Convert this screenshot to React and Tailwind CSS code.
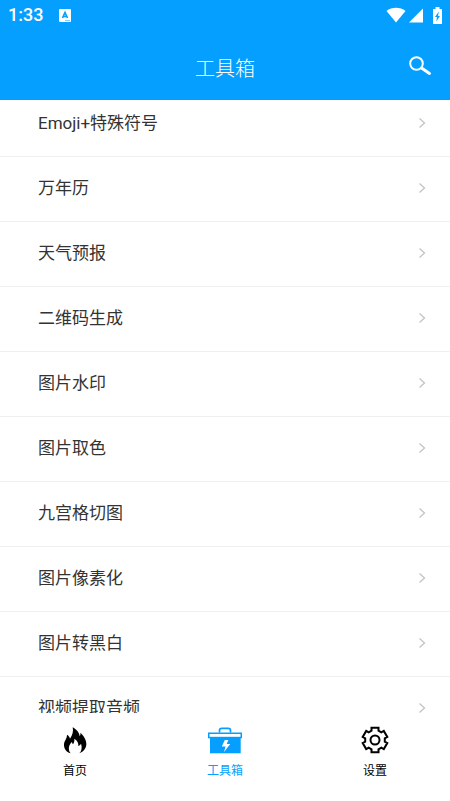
import React from "react";

const tools = [
  "Emoji+特殊符号",
  "万年历",
  "天气预报",
  "二维码生成",
  "图片水印",
  "图片取色",
  "九宫格切图",
  "图片像素化",
  "图片转黑白",
  "视频提取音频",
];

function StatusBar() {
  return (
    <div className="flex h-[30px] items-center justify-between px-2">
      <div className="flex items-center gap-4">
        <span className="font-['Roboto',sans-serif] text-[18px] leading-6 font-medium">1:33</span>
        <svg className="h-[13px] w-3" viewBox="0 0 12 13" aria-hidden="true">
          <rect width="12" height="13" rx="1" fill="#fff" />
          <path d="M3.500 9 6 3.500 8.500 9M4.300 7.500h3.400" fill="none" stroke="#049fff" strokeWidth="1.700" />
          <path d="M6 11.500h5" stroke="#049fff" strokeWidth="0.500" />
        </svg>
      </div>
      <div className="flex items-center" aria-hidden="true">
        <svg className="h-4 w-5" viewBox="0 0 20 16">
          <path d="M0.500 4C6 -0.300 14 -0.300 19.500 4L10 15.500Z" fill="#fff" />
        </svg>
        <svg className="ml-[3px] h-4 w-[14px]" viewBox="0 0 14 16">
          <path d="M14 1.500V15.500H0Z" fill="#fff" />
        </svg>
        <svg className="ml-[10px] h-[17px] w-[9px]" viewBox="0 0 9 17">
          <path d="M2.500 0h4v2H9v15H0V2h2.500Z" fill="#fff" />
          <path d="M5.800 4.500 2 10h2l-.7 4.500L7 9H5Z" fill="#049fff" />
        </svg>
      </div>
    </div>
  );
}

function FlameIcon() {
  return (
    <svg className="h-7 w-6" viewBox="0 0 72 84" aria-hidden="true">
      <path
        d="M29 4C40 10 49 19 50 31C52 28 53 24 52 20C61 28 70 40 70 54C70 66 62 77 49 82C56 75 58 63 54 53C51 57 49 59 46 60C47 51 43 43 34 38C35 45 33 50 30 55C28 53 27 51 27 48C17 56 14 71 23 82C9 78 2 67 3 54C4 44 12 38 12 26C17 29 20 33 21 38C28 28 32 16 29 4Z"
        fill="#000"
      />
    </svg>
  );
}

function ToolboxIcon() {
  return (
    <svg className="h-7 w-9" viewBox="0 0 36 28" aria-hidden="true">
      <path d="M12.500 6.500V4.500Q12.500 2.300 14.700 2.300H21.300Q23.500 2.300 23.500 4.500V6.500" fill="none" stroke="#049fff" strokeWidth="1.700" />
      <path d="M3 11.500H33.700V27.300H3Z" fill="#049fff" />
      <rect x="1.750" y="7.250" width="32.500" height="4.300" fill="#fff" stroke="#049fff" strokeWidth="1.500" />
      <path d="M17.800 14h3.600l-1.700 4h3.600L17 26l1.500-5.500H14.800Z" fill="#fff" />
    </svg>
  );
}

function GearIcon() {
  return (
    <svg className="h-7 w-7" viewBox="0 0 28 28" fill="none" stroke="#000" strokeWidth="2" aria-hidden="true">
      <path d="M10.500 4.700V1.800H17.500V4.700L20.300 6.300 22.800 4.900 26.300 10.900 23.800 12.400V15.600L26.300 17.100 22.800 23.100 20.300 21.700 17.500 23.300V26.200H10.500V23.300L7.700 21.700 5.200 23.100 1.700 17.100 4.200 15.600V12.400L1.700 10.900 5.200 4.900 7.700 6.300Z" />
      <circle cx="14" cy="14" r="4.500" />
    </svg>
  );
}

const tabs = [
  { label: "首页", Icon: FlameIcon },
  { label: "工具箱", Icon: ToolboxIcon, active: true },
  { label: "设置", Icon: GearIcon },
];

export default function App() {
  return (
    <div className="flex h-screen flex-col bg-white font-['Roboto','Noto_Sans_CJK_SC',sans-serif] text-[#333]">
      <header className="shrink-0 bg-[#049fff] text-white">
        <StatusBar />
        <div className="grid h-[70px] grid-cols-[1fr_auto_1fr] items-center px-4">
          <h1 className="col-start-2 pt-2 text-[20px] leading-7 font-light">工具箱</h1>
          <button type="button" aria-label="搜索" className="justify-self-end">
            <svg className="h-7 w-7" viewBox="0 0 28 28" fill="none" stroke="#fff" aria-hidden="true">
              <circle cx="10.500" cy="12.500" r="6.300" strokeWidth="2" />
              <path d="M15.500 17 23.500 22.500" strokeWidth="3" strokeLinecap="round" />
            </svg>
          </button>
        </div>
      </header>

      <main className="min-h-0 flex-1 overflow-hidden">
        <ul className="-mt-2">
          {tools.map((name) => (
            <li key={name} className="border-b border-[#f0f0f0]">
              <a href="#" className="flex h-16 items-center justify-between pr-6 pb-0.5 pl-[38px]">
                <span className="text-[17px] leading-6">{name}</span>
                <svg className="h-3 w-2" viewBox="0 0 8 12" fill="none" stroke="#c4c4c4" strokeWidth="1.300" aria-hidden="true">
                  <path d="M1.500 1.500 6.500 6 1.500 10.500" />
                </svg>
              </a>
            </li>
          ))}
        </ul>
      </main>

      <nav className="grid h-[88px] shrink-0 grid-cols-3 bg-white">
        {tabs.map(({ label, Icon, active }) => (
          <button
            key={label}
            type="button"
            aria-current={active ? "page" : undefined}
            className={`flex flex-col items-center gap-[7px] pt-[13px] text-[12px] leading-5 ${active ? "text-[#049fff]" : "text-black"}`}
          >
            <Icon />
            <span>{label}</span>
          </button>
        ))}
      </nav>
    </div>
  );
}
